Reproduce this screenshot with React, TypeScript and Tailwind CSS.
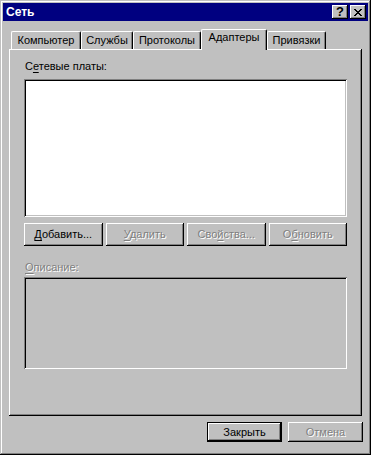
const raised =
  "shadow-[inset_-1px_-1px_#000,inset_1px_1px_#fff,inset_-2px_-2px_#808080]";
const sunken =
  "shadow-[inset_1px_1px_#808080,inset_-1px_-1px_#fff,inset_2px_2px_#000,inset_-2px_-2px_#c0c0c0]";
const disabled = "text-[#808080] [text-shadow:1px_1px_0_#fff]";

const tabs = [
  { label: "Компьютер", w: "w-[70px]" },
  { label: "Службы", w: "w-[52px]" },
  { label: "Протоколы", w: "w-[68px]" },
  { label: "Адаптеры", w: "w-[66px]", active: true },
  { label: "Привязки", w: "w-[59px]" },
];

function Mn({ children }: { children: string }) {
  return <span className="underline decoration-1 underline-offset-[2px]">{children}</span>;
}

function CloseGlyph() {
  return (
    <svg width="8" height="7" viewBox="0 0 8 7" shapeRendering="crispEdges">
      <path
        fill="#000"
        d="M0 0h2v1H0zM6 0h2v1H6zM1 1h2v1H1zM5 1h2v1H5zM2 2h4v1H2zM3 3h2v1H3zM2 4h4v1H2zM1 5h2v1H1zM5 5h2v1H5zM0 6h2v1H0zM6 6h2v1H6z"
      />
    </svg>
  );
}

function Button({
  children,
  off,
}: {
  children: React.ReactNode;
  off?: boolean;
}) {
  return (
    <div
      className={`h-[23px] flex items-center justify-center bg-[#c0c0c0] ${raised} ${
        off ? disabled : "text-black"
      }`}
    >
      <span className="leading-[13px]">{children}</span>
    </div>
  );
}

export default function App() {
  return (
    <div
      className={`w-[371px] h-[455px] bg-[#c0c0c0] p-[3px] flex flex-col text-[11px] font-['Liberation_Sans',Arial,sans-serif] shadow-[inset_-1px_-1px_#000,inset_1px_1px_#c0c0c0,inset_-2px_-2px_#808080,inset_2px_2px_#fff]`}
    >
      {/* title bar */}
      <div className="h-[18px] bg-[#000080] flex items-center justify-between pl-[3px] pr-[2px]">
        <span className="text-white font-bold text-[12px] leading-none">Сеть</span>
        <div className="flex gap-[2px]">
          <div
            className={`w-[16px] h-[14px] bg-[#c0c0c0] flex items-center justify-center ${raised}`}
          >
            <span className="font-bold text-[13px] leading-none pb-[1px] text-black">?</span>
          </div>
          <div
            className={`w-[16px] h-[14px] bg-[#c0c0c0] flex items-center justify-center ${raised}`}
          >
            <CloseGlyph />
          </div>
        </div>
      </div>

      {/* tabs */}
      <div className="mt-[8px] ml-[6px] pl-[2px] h-[20px] flex items-end">
        {tabs.map((t) =>
          t.active ? (
            <div
              key={t.label}
              className={`${t.w} h-[21px] -mb-[1px] relative z-10 bg-[#c0c0c0] border-l border-t border-r border-l-white border-t-white border-r-black rounded-t-[2px] shadow-[inset_-1px_0_#808080] flex justify-center pt-[1px]`}
            >
              <span className="leading-[13px] text-black">{t.label}</span>
            </div>
          ) : (
            <div
              key={t.label}
              className={`${t.w} h-[18px] bg-[#c0c0c0] border-l border-t border-r border-l-white border-t-white border-r-black rounded-t-[2px] shadow-[inset_-1px_0_#808080] flex justify-center pt-[2px]`}
            >
              <span className="leading-[13px] text-black">{t.label}</span>
            </div>
          )
        )}
      </div>

      {/* panel */}
      <div
        className={`ml-[6px] w-[353px] h-[367px] bg-[#c0c0c0] flex flex-col pl-[15px] shadow-[inset_-1px_-1px_#000,inset_1px_1px_#fff,inset_-2px_-2px_#808080]`}
      >
        <div className="mt-[11px] leading-[13px] text-black pl-[1px]">
          С<Mn>е</Mn>тевые платы:
        </div>
        <div className={`mt-[6px] w-[323px] h-[138px] bg-white ${sunken}`} />

        <div className="mt-[6px] w-[323px] grid grid-cols-4 gap-[3px]">
          <Button>
            <Mn>Д</Mn>обавить...
          </Button>
          <Button off>
            <Mn>У</Mn>далить
          </Button>
          <Button off>
            Сво<Mn>й</Mn>ства...
          </Button>
          <Button off>
            О<Mn>б</Mn>новить
          </Button>
        </div>

        <div className={`mt-[15px] leading-[13px] pl-[1px] ${disabled}`}>
          <Mn>О</Mn>писание:
        </div>
        <div className={`mt-[3px] w-[323px] h-[92px] bg-[#c0c0c0] ${sunken}`} />
      </div>

      {/* dialog buttons */}
      <div className="mt-[6px] flex justify-end gap-[6px] pr-[5px]">
        <div className="w-[75px] h-[20px] border border-black">
          <div
            className={`w-full h-full flex items-center justify-center bg-[#c0c0c0] text-black ${raised}`}
          >
            <span className="leading-[13px]">Закрыть</span>
          </div>
        </div>
        <div
          className={`w-[75px] h-[20px] flex items-center justify-center bg-[#c0c0c0] ${raised} ${disabled}`}
        >
          <span className="leading-[13px]">Отмена</span>
        </div>
      </div>
    </div>
  );
}
